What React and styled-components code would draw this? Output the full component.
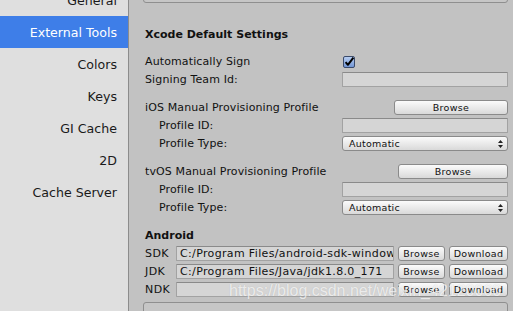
import React from 'react'
import styled, { createGlobalStyle } from 'styled-components'

const navItems = ['General', 'External Tools', 'Colors', 'Keys', 'GI Cache', '2D', 'Cache Server']

function Checkbox() {
    return (
        <CheckBox>
            <svg width="12" height="12" viewBox="0 0 12 12">
                <defs>
                    <linearGradient id="cbfill" x1="0" y1="0" x2="0" y2="1">
                        <stop offset="0" stopColor="#b9cff2" />
                        <stop offset="1" stopColor="#6f93d3" />
                    </linearGradient>
                </defs>
                <rect x="0.5" y="0.5" width="11" height="11" rx="1.5" fill="url(#cbfill)" stroke="#3b4b6b" />
                <path d="M2.6 6.2 L4.9 8.8 L10.4 1.6" fill="none" stroke="#000" strokeWidth="2" strokeLinejoin="round" />
            </svg>
        </CheckBox>
    )
}

function Popup({ value }) {
    return (
        <Select>
            <span>{value}</span>
            <svg width="5" height="8" viewBox="0 0 5 8">
                <path d="M2.5 0 L5 3 L0 3 Z M2.5 8 L5 5 L0 5 Z" fill="#222" />
            </svg>
        </Select>
    )
}

function App() {
    return (
        <Window>
            <GlobalStyle />
            <Sidebar>
                <NavList>
                    {navItems.map((item) => (
                        <NavItem key={item} $active={item === 'External Tools'}>{item}</NavItem>
                    ))}
                </NavList>
            </Sidebar>
            <Main>
                <Box />
                <Title>Xcode Default Settings</Title>

                <Row $gap={9}>
                    <Label>Automatically Sign</Label>
                    <Control><Checkbox /></Control>
                </Row>
                <Row>
                    <Label>Signing Team Id:</Label>
                    <Control><Field /></Control>
                </Row>

                <Row $gap={10}>
                    <Label>iOS Manual Provisioning Profile</Label>
                    <Control><Button $w={114}>Browse</Button></Control>
                </Row>
                <Row $indent={14}>
                    <Label>Profile ID:</Label>
                    <Control><Field /></Control>
                </Row>
                <Row $indent={14}>
                    <Label>Profile Type:</Label>
                    <Control><Popup value="Automatic" /></Control>
                </Row>

                <Row $gap={10}>
                    <Label>tvOS Manual Provisioning Profile</Label>
                    <Control><Button $w={110}>Browse</Button></Control>
                </Row>
                <Row $indent={14}>
                    <Label>Profile ID:</Label>
                    <Control><Field /></Control>
                </Row>
                <Row $indent={14}>
                    <Label>Profile Type:</Label>
                    <Control><Popup value="Automatic" /></Control>
                </Row>

                <Title $gap={10}>Android</Title>
                <SdkRow>
                    <SdkLabel>SDK</SdkLabel>
                    <Field $grow>C:/Program Files/android-sdk-windows</Field>
                    <Button $w={47}>Browse</Button>
                    <Button $w={59}>Download</Button>
                </SdkRow>
                <SdkRow>
                    <SdkLabel>JDK</SdkLabel>
                    <Field $grow>C:/Program Files/Java/jdk1.8.0_171</Field>
                    <Button $w={47}>Browse</Button>
                    <Button $w={59}>Download</Button>
                </SdkRow>
                <SdkRow>
                    <SdkLabel>NDK</SdkLabel>
                    <Field $grow />
                    <Button $w={47}>Browse</Button>
                    <Button $w={59}>Download</Button>
                </SdkRow>
                <Box $bottom />
            </Main>
            <Watermark>https://blog.csdn.net/weixin_42120060</Watermark>
        </Window>
    )
}

export default App

const GlobalStyle = createGlobalStyle`
    html, body {
        margin: 0;
        padding: 0;
        background: #c2c2c2;
    }
    body {
        font-family: "DejaVu Sans", "Liberation Sans", sans-serif;
        font-size: 11px;
        color: #111;
    }
`

const Window = styled.div`
    position: relative;
    display: flex;
    width: 513px;
    height: 311px;
    overflow: hidden;
`

const Sidebar = styled.nav`
    flex: none;
    width: 128px;
    background: #dfdfdf;
    border-right: 1px solid #8c8c8c;
    overflow: hidden;
`

const NavList = styled.div`
    display: flex;
    flex-direction: column;
    margin-top: -16px;
`

const NavItem = styled.div`
    height: 32px;
    display: flex;
    align-items: center;
    justify-content: flex-end;
    padding-right: 11px;
    font-size: 12.6px;
    color: ${(p) => (p.$active ? '#ffffff' : '#1a1a1a')};
    background: ${(p) => (p.$active ? '#3e7ee8' : 'transparent')};
`

const Main = styled.main`
    flex: 1;
    display: flex;
    flex-direction: column;
    padding: 0 5px 0 14px;
    min-width: 0;
    overflow: hidden;

    & > * {
        flex-shrink: 0;
    }
`

const Box = styled.div`
    box-sizing: border-box;
    height: 14px;
    margin-top: ${(p) => (p.$bottom ? '2px' : '-11px')};
    border: 1px solid #8f8f8f;
    border-radius: 3px;
    background: #c6c6c6;
`

const Title = styled.div`
    height: 18px;
    line-height: 16px;
    margin-top: ${(p) => (p.$gap ? p.$gap : 24)}px;
    padding-left: 2px;
    font-weight: bold;
`

const Row = styled.div`
    display: flex;
    align-items: flex-start;
    height: 18px;
    margin-top: ${(p) => p.$gap || 0}px;
    padding-left: ${(p) => 2 + (p.$indent || 0)}px;
`

const Label = styled.div`
    flex: 1;
    line-height: 16px;
    letter-spacing: 0.12px;
    white-space: nowrap;
`

const Control = styled.div`
    flex: none;
    width: 166px;
    display: flex;
    justify-content: flex-end;
`

const CheckBox = styled.div`
    width: 166px;
    height: 12px;
    margin-top: 2px;
    padding-left: 1px;
    display: flex;
`

const Field = styled.div`
    box-sizing: border-box;
    height: 15px;
    width: ${(p) => (p.$grow ? 'auto' : '100%')};
    flex: ${(p) => (p.$grow ? 1 : 'none')};
    min-width: 0;
    padding: 0 3px;
    line-height: 13px;
    letter-spacing: 0.35px;
    white-space: nowrap;
    overflow: hidden;
    background: #d5d5d5;
    border: 1px solid #a2a2a2;
    border-top-color: #8a8a8a;
    border-radius: 1px;
    color: #111;
`

const Button = styled.div`
    box-sizing: border-box;
    width: ${(p) => p.$w}px;
    height: 15px;
    line-height: 13px;
    font-size: 9.5px;
    text-align: center;
    letter-spacing: 0.3px;
    white-space: nowrap;
    background: linear-gradient(#fbfbfb, #d9d9d9);
    border: 1px solid #8a8a8a;
    border-radius: 3px;
    color: #111;
`

const Select = styled.div`
    box-sizing: border-box;
    width: 100%;
    height: 15px;
    display: flex;
    align-items: center;
    justify-content: space-between;
    padding: 0 4px 0 6px;
    font-size: 9.5px;
    letter-spacing: 0.25px;
    background: linear-gradient(#fbfbfb, #d9d9d9);
    border: 1px solid #8a8a8a;
    border-radius: 3px;
`

const SdkRow = styled.div`
    display: flex;
    align-items: flex-start;
    gap: 4px;
    height: 18px;
    padding-left: 2px;
`

const SdkLabel = styled.div`
    flex: none;
    width: 27px;
    line-height: 15px;
    letter-spacing: 0.4px;
`

const Watermark = styled.div`
    position: absolute;
    left: 229px;
    top: 282px;
    font-family: "Liberation Sans", sans-serif;
    font-size: 16px;
    line-height: 18px;
    white-space: nowrap;
    color: rgba(255, 255, 255, 0.72);
    text-shadow: 0 0 1px rgba(0, 0, 0, 0.15);
    pointer-events: none;
`
